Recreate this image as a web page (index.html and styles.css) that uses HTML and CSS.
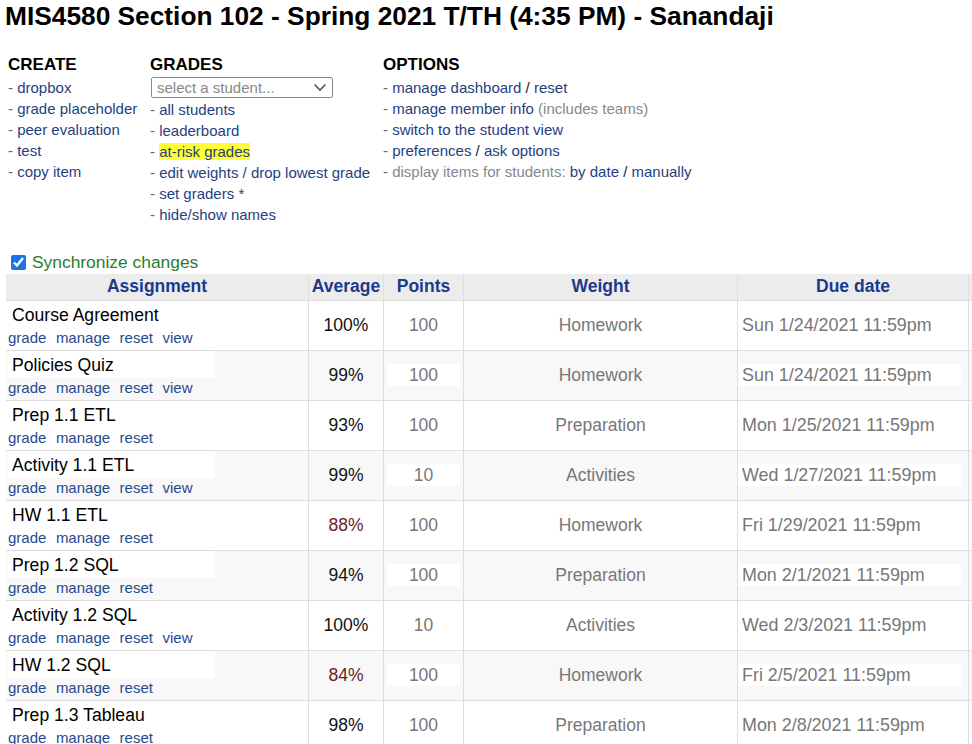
FILE: index.html
```html
<!DOCTYPE html>
<html>
<head>
<meta charset="utf-8">
<link rel="stylesheet" href="styles.css">
</head>
<body>
<h1 class="title">MIS4580 Section 102 - Spring 2021 T/TH (4:35 PM) - Sanandaji</h1>
<div class="menus">
  <div class="menu menu-create">
    <h2>CREATE</h2>
    <div class="item">- <a>dropbox</a></div>
    <div class="item">- <a>grade placeholder</a></div>
    <div class="item">- <a>peer evaluation</a></div>
    <div class="item">- <a>test</a></div>
    <div class="item">- <a>copy item</a></div>
  </div>
  <div class="menu menu-grades">
    <h2>GRADES</h2>
    <div class="select"><span>select a student...</span><svg width="14" height="9" viewBox="0 0 14 9"><path d="M1.5 1.5 L7 7 L12.5 1.5" fill="none" stroke="#555" stroke-width="1.6"/></svg></div>
    <div class="item">- <a>all students</a></div>
    <div class="item">- <a>leaderboard</a></div>
    <div class="item">- <a class="hl">at-risk grades</a></div>
    <div class="item">- <a>edit weights / drop lowest grade</a></div>
    <div class="item">- <a>set graders *</a></div>
    <div class="item">- <a>hide/show names</a></div>
  </div>
  <div class="menu menu-options">
    <h2>OPTIONS</h2>
    <div class="item">- <a>manage dashboard</a> <span class="slash">/</span> <a>reset</a></div>
    <div class="item">- <a>manage member info</a> <span class="muted">(includes teams)</span></div>
    <div class="item">- <a>switch to the student view</a></div>
    <div class="item">- <a>preferences</a> <span class="slash">/</span> <a>ask options</a></div>
    <div class="item">- <span class="muted">display items for students:</span> <a>by date</a> <span class="slash">/</span> <a>manually</a></div>
  </div>
</div>
<label class="sync"><input type="checkbox" checked><span>Synchronize changes</span></label>
<div class="tablewrap">
<table class="grid">
  <thead>
    <tr><th class="c-name">Assignment</th><th class="c-avg">Average</th><th class="c-pts">Points</th><th class="c-wt">Weight</th><th class="c-due">Due date</th><th class="c-vis">Visible</th></tr>
  </thead>
  <tbody>
    <tr><td class="c-name"><div class="nm">Course Agreement</div><div class="acts"><a>grade</a><a>manage</a><a>reset</a><a>view</a></div></td><td class="c-avg">100%</td><td class="c-pts"><span class="box">100</span></td><td class="c-wt">Homework</td><td class="c-due"><span class="box">Sun 1/24/2021 11:59pm</span></td><td class="c-vis"></td></tr>
    <tr class="alt"><td class="c-name"><div class="nm">Policies Quiz</div><div class="acts"><a>grade</a><a>manage</a><a>reset</a><a>view</a></div></td><td class="c-avg">99%</td><td class="c-pts"><span class="box">100</span></td><td class="c-wt">Homework</td><td class="c-due"><span class="box">Sun 1/24/2021 11:59pm</span></td><td class="c-vis"></td></tr>
    <tr><td class="c-name"><div class="nm">Prep 1.1 ETL</div><div class="acts"><a>grade</a><a>manage</a><a>reset</a></div></td><td class="c-avg">93%</td><td class="c-pts"><span class="box">100</span></td><td class="c-wt">Preparation</td><td class="c-due"><span class="box">Mon 1/25/2021 11:59pm</span></td><td class="c-vis"></td></tr>
    <tr class="alt"><td class="c-name"><div class="nm">Activity 1.1 ETL</div><div class="acts"><a>grade</a><a>manage</a><a>reset</a><a>view</a></div></td><td class="c-avg">99%</td><td class="c-pts"><span class="box">10</span></td><td class="c-wt">Activities</td><td class="c-due"><span class="box">Wed 1/27/2021 11:59pm</span></td><td class="c-vis"></td></tr>
    <tr><td class="c-name"><div class="nm">HW 1.1 ETL</div><div class="acts"><a>grade</a><a>manage</a><a>reset</a></div></td><td class="c-avg low">88%</td><td class="c-pts"><span class="box">100</span></td><td class="c-wt">Homework</td><td class="c-due"><span class="box">Fri 1/29/2021 11:59pm</span></td><td class="c-vis"></td></tr>
    <tr class="alt"><td class="c-name"><div class="nm">Prep 1.2 SQL</div><div class="acts"><a>grade</a><a>manage</a><a>reset</a></div></td><td class="c-avg">94%</td><td class="c-pts"><span class="box">100</span></td><td class="c-wt">Preparation</td><td class="c-due"><span class="box">Mon 2/1/2021 11:59pm</span></td><td class="c-vis"></td></tr>
    <tr><td class="c-name"><div class="nm">Activity 1.2 SQL</div><div class="acts"><a>grade</a><a>manage</a><a>reset</a><a>view</a></div></td><td class="c-avg">100%</td><td class="c-pts"><span class="box">10</span></td><td class="c-wt">Activities</td><td class="c-due"><span class="box">Wed 2/3/2021 11:59pm</span></td><td class="c-vis"></td></tr>
    <tr class="alt"><td class="c-name"><div class="nm">HW 1.2 SQL</div><div class="acts"><a>grade</a><a>manage</a><a>reset</a></div></td><td class="c-avg low">84%</td><td class="c-pts"><span class="box">100</span></td><td class="c-wt">Homework</td><td class="c-due"><span class="box">Fri 2/5/2021 11:59pm</span></td><td class="c-vis"></td></tr>
    <tr><td class="c-name"><div class="nm">Prep 1.3 Tableau</div><div class="acts"><a>grade</a><a>manage</a><a>reset</a></div></td><td class="c-avg">98%</td><td class="c-pts"><span class="box">100</span></td><td class="c-wt">Preparation</td><td class="c-due"><span class="box">Mon 2/8/2021 11:59pm</span></td><td class="c-vis"></td></tr>
  </tbody>
</table>
</div>
</body>
</html>
```
FILE: styles.css
```css
html, body {
  margin: 0;
  padding: 0;
  background: #fff;
  font-family: "Liberation Sans", Arial, sans-serif;
  color: #000;
  overflow: hidden;
  width: 972px;
  height: 744px;
}
.title {
  margin: 0;
  padding: 1px 0 0 5px;
  font-size: 26.3px;
  line-height: 30px;
  font-weight: bold;
  white-space: nowrap;
}
.menus {
  display: flex;
  padding: 23px 0 0 8px;
}
.menu h2 {
  margin: 0 0 2px 0;
  font-size: 17px;
  line-height: 21px;
  font-weight: bold;
}
.menu-create { width: 142px; }
.menu-grades { width: 233px; }
.item {
  font-size: 15px;
  line-height: 21.1px;
  color: #666;
  white-space: nowrap;
}
.item a { color: #1f3f7f; }
.item .muted { color: #888; }
.item .slash { color: #222; }
.hl { background: #ffff33; }
.select {
  box-sizing: border-box;
  width: 182px;
  height: 21px;
  margin: 0 0 1px 1px;
  border: 1px solid #8a8a8a;
  border-radius: 2px;
  display: flex;
  align-items: center;
  justify-content: space-between;
  padding: 0 5px 0 5px;
  font-size: 15px;
  color: #888;
}
.sync {
  display: flex;
  align-items: center;
  margin: 26px 0 0 10px;
  font-size: 17.4px;
  color: #2a7d2a;
  height: 22px;
}
.sync input {
  margin: 0 6px 0 1px;
  width: 15px;
  height: 15px;
  accent-color: #1a73e8;
}
.tablewrap {
  padding-left: 6px;
  padding-top: 0;
}
.grid {
  border-collapse: collapse;
  table-layout: fixed;
  width: 1040px;
}
.grid th {
  background: #ececec;
  color: #1b3a8c;
  font-size: 17.5px;
  font-weight: bold;
  height: 26px;
  padding: 0;
  border-left: 1px solid #dedede;
  text-align: center;
}
.grid td {
  border-left: 1px solid #dedede;
  border-top: 1px solid #dedede;
  height: 49px;
  padding: 0;
  font-size: 17.5px;
  vertical-align: middle;
}
.grid th:first-child, .grid td:first-child { border-left: none; }
.c-name { width: 302px; }
.c-avg { width: 74px; }
.c-pts { width: 79px; }
.c-wt { width: 273px; }
.c-due { width: 230px; }
.c-vis { width: 80px; }
td.c-name { vertical-align: top; }
.nm {
  font-size: 17.6px;
  line-height: 20px;
  padding: 4px 0 0 4px;
  margin: 0 0 0 2px;
  height: 27px;
  box-sizing: border-box;
  width: 207px;
}
.acts {
  font-size: 15px;
  line-height: 18px;
  padding: 1px 0 0 2px;
  white-space: nowrap;
}
.acts a { color: #1f4a8f; margin-right: 9.5px; }
td.c-avg { text-align: center; color: #111; }
td.c-avg.low { color: #6b1d1d; }
td.c-pts { text-align: center; color: #777; }
td.c-wt { text-align: center; color: #777; }
td.c-due { color: #777; padding-left: 0; font-size: 17.9px; }
.box {
  display: inline-block;
  line-height: 22px;
}
td.c-pts .box { width: 73px; }
td.c-due .box { width: 223px; padding-left: 4px; box-sizing: border-box; }
tr.alt td { background: #f8f8f8; }
tr.alt .nm, tr.alt .box { background: #fff; }
```
